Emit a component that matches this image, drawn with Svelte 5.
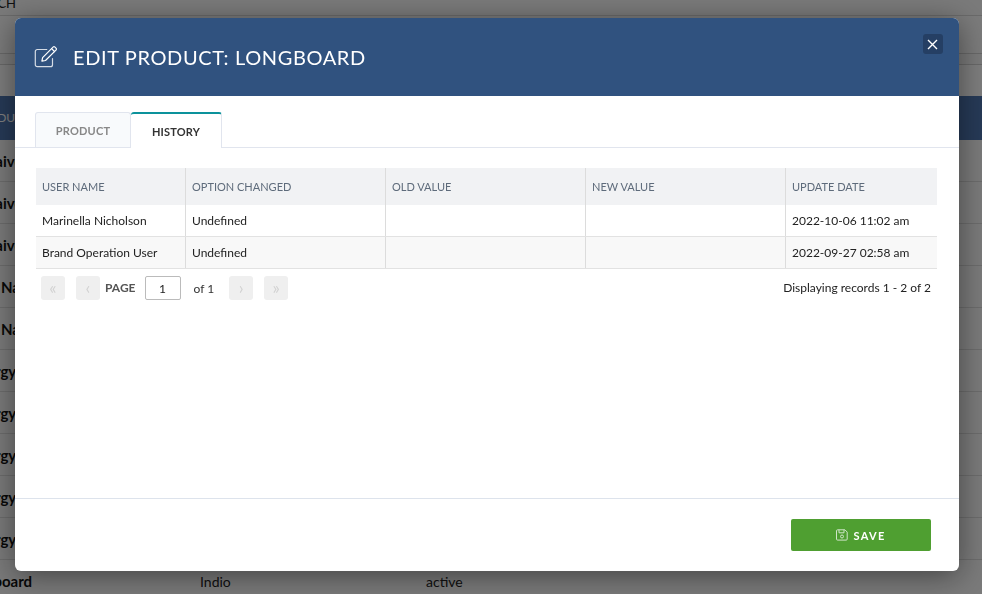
<script>
	const bgRows = [
		"Naive", "Naive", "Naive", "Nat", "Nat",
		"Energy", "Energy", "Energy", "Energy", "Energy"
	];
	const columns = ["User Name", "Option Changed", "Old Value", "New Value", "Update Date"];
	const records = [
		{ user: "Marinella Nicholson", option: "Undefined", date: "2022-10-06 11:02 am" },
		{ user: "Brand Operation User", option: "Undefined", date: "2022-09-27 02:58 am" }
	];
</script>

<div class="page">
	<div class="topbar"><span>SEARCH</span></div>
	<div class="toolbar"></div>
	<div class="subbar"></div>
	<div class="thead"><span>PRODUCT</span></div>
	{#each bgRows as name, i}
		<div class="bgrow"><b class:nat={i === 3 || i === 4} class:energy={i > 4}>{name}</b></div>
	{/each}
	<div class="bgrow last">
		<b>Longboard</b>
		<span class="city">Indio</span>
		<span class="state">active</span>
	</div>
</div>

<div class="overlay">
	<div class="modal">
		<header>
			<svg class="edit-icon" viewBox="0 0 24 24" width="24" height="24" fill="none" stroke="#fff" stroke-width="1.2" stroke-linejoin="round" stroke-linecap="round">
				<path d="M18.500 13.500v6.200a2 2 0 0 1-2 2H3.300a2 2 0 0 1-2-2V6.500a2 2 0 0 1 2-2h9.500" opacity="0.8" />
				<path d="M8.600 12.600 19.300 1.900a1 1 0 0 1 1.400 0l1.500 1.500a1 1 0 0 1 0 1.400L11.500 15.500l-3.600.7z" />
				<path d="M17.600 3.600l2.900 2.900" />
			</svg>
			<h1>EDIT PRODUCT: LONGBOARD</h1>
			<button class="close" aria-label="Close">
				<svg viewBox="0 0 11 11" width="11" height="11" stroke="#fff" stroke-width="1.4"><path d="M1 1l9 9M10 1l-9 9" /></svg>
			</button>
		</header>

		<div class="body">
			<div class="tabs">
				<div class="tab">PRODUCT</div>
				<div class="tab active">HISTORY</div>
			</div>

			<div class="grid">
				<div class="row head">
					{#each columns as col}
						<div class="cell">{col}</div>
					{/each}
				</div>
				{#each records as rec, i}
					<div class="row" class:alt={i % 2 === 1}>
						<div class="cell">{rec.user}</div>
						<div class="cell">{rec.option}</div>
						<div class="cell"></div>
						<div class="cell"></div>
						<div class="cell">{rec.date}</div>
					</div>
				{/each}
			</div>

			<div class="pager">
				<button class="pg" aria-label="First">«</button>
				<button class="pg second" aria-label="Previous">‹</button>
				<span class="page-label">PAGE</span>
				<input value="1" />
				<span class="of">of 1</span>
				<button class="pg" aria-label="Next">›</button>
				<button class="pg second" aria-label="Last">»</button>
				<span class="count">Displaying records 1 - 2 of 2</span>
			</div>
		</div>

		<footer>
			<button class="save">
				<svg viewBox="0 0 12 12" width="12" height="12" fill="none" stroke="#cfe5c8" stroke-width="1">
					<path d="M1.500.8h7.400l2.300 2.300v7a1 1 0 0 1-1 1h-8.700a1 1 0 0 1-1-1v-8.300a1 1 0 0 1 1-1z" />
					<path d="M3 .8v3h5v-3" />
					<circle cx="6" cy="7.500" r="1.500" />
				</svg>
				SAVE
			</button>
		</footer>
	</div>
</div>

<style>
	:global(body) {
		margin: 0;
		font-family: Lato, "Open Sans", sans-serif;
	}
	.page {
		height: 594px;
		overflow: hidden;
		background: #f4f4f4;
		color: #222;
		font-size: 14px;
	}
	.topbar {
		height: 15px;
		background: #f4f4f4;
		border-bottom: 1px solid #d4d4d4;
		line-height: 6px;
		font-size: 13px;
		overflow: hidden;
		margin-left: -34px;
	}
	.toolbar {
		height: 37px;
		background: #f6f6f6;
		border-bottom: 1px solid #d0d0d0;
	}
	.subbar {
		height: 31px;
		background: #fbfbfb;
		border-top: 1px solid #d0d0d0;
		margin-top: 10px;
	}
	.thead {
		height: 44px;
		background: #4d74ae;
		color: #fff;
		line-height: 44px;
		font-size: 12px;
		margin-left: -27px;
	}
	.bgrow {
		height: 41px;
		border-bottom: 1px solid #d8d8d8;
		line-height: 43px;
		font-size: 15px;
		white-space: nowrap;
	}
	.bgrow b {
		margin-left: -16px;
		color: #111;
	}
	.bgrow b.nat {
		margin-left: 1px;
	}
	.bgrow b.energy {
		margin-left: -30px;
	}
	.bgrow.last {
		display: flex;
		background: #f5f5f5;
		border: 0;
		font-size: 14px;
	}
	.bgrow.last b {
		width: 200px;
		margin-left: -39px;
		flex: none;
		font-size: 15px;
	}
	.city {
		margin-left: 39px;
		width: 226px;
		flex: none;
	}

	.overlay {
		position: fixed;
		inset: 0;
		background: rgba(0, 0, 0, 0.5);
		display: flex;
		justify-content: flex-start;
		align-items: flex-start;
		padding: 18px 0 0 15px;
	}
	.modal {
		width: 944px;
		height: 553px;
		background: #fff;
		border-radius: 6px;
		overflow: hidden;
		display: flex;
		flex-direction: column;
		box-shadow: 0 5px 30px rgba(0, 0, 0, 0.45);
	}
	header {
		flex: none;
		position: relative;
		height: 78px;
		background: #30527f;
		display: flex;
		align-items: center;
		padding-left: 19px;
		color: #fff;
	}
	.edit-icon {
		margin-right: 15px;
		flex: none;
	}
	h1 {
		margin: 0;
		font-size: 20px;
		font-weight: 400;
		letter-spacing: 0.62px;
	}
	.close {
		position: absolute;
		top: 16px;
		right: 16px;
		width: 20px;
		height: 20px;
		padding: 0 2px 0 0;
		border: 0;
		border-radius: 3px;
		background: #253f64;
		display: flex;
		align-items: center;
		justify-content: center;
	}
	.body {
		flex: 1;
		padding: 16px 0 0;
		min-height: 0;
	}
	.tabs {
		display: flex;
		padding-left: 20px;
		border-bottom: 1px solid #e1e5ee;
		height: 35px;
		font-size: 11px;
		font-weight: 700;
		letter-spacing: 0.2px;
	}
	.tab {
		width: 96px;
		height: 35px;
		box-sizing: border-box;
		background: #f8fafc;
		border: 1px solid #e1e5ee;
		border-bottom: 0;
		border-radius: 3px 3px 0 0;
		color: #888;
		text-align: center;
		line-height: 35px;
	}
	.tab.active {
		width: 91px;
		height: 36px;
		background: #fff;
		border-top: 2px solid #0c929b;
		border-left: 0;
		color: #333;
		line-height: 35px;
	}
	.grid {
		margin: 20px 22px 0 21px;
		font-size: 12px;
		color: #222;
	}
	.row {
		display: grid;
		grid-template-columns: 149px 200px 200px 200px 1fr;
		height: 32px;
		box-sizing: border-box;
		border-bottom: 1px solid #e2e2e2;
		line-height: 31px;
	}
	.row.alt {
		background: #f8f8f8;
	}
	.row.head {
		height: 37px;
		line-height: 37px;
		background: #f1f2f4;
		color: #5e6b7b;
		font-size: 11px;
		text-transform: uppercase;
		border: 0;
	}
	.cell {
		padding-left: 6px;
		border-left: 1px solid #dcdcdc;
		white-space: nowrap;
	}
	.cell:first-child {
		border-left: 0;
	}
	.pager {
		display: flex;
		align-items: center;
		margin: 7px 28px 0 26px;
		height: 24px;
		font-size: 12px;
		color: #333;
	}
	.pg {
		width: 24px;
		height: 24px;
		padding: 0 0 2px;
		border: 0;
		border-radius: 3px;
		background: #efefef;
		color: #d2d2d2;
		font-size: 17px;
		font-family: inherit;
	}
	.pg.second {
		margin-left: 11px;
	}
	.page-label {
		margin: 0 0 1px 5px;
		font-weight: 700;
		color: #555;
	}
	input {
		width: 36px;
		height: 24px;
		box-sizing: border-box;
		margin-left: 9px;
		border: 1px solid #bbb;
		border-radius: 2px;
		text-align: center;
		font: 12px Lato, sans-serif;
		color: #222;
		padding: 0;
	}
	.of {
		margin: 1px 15px 0 13px;
	}
	.count {
		margin: 0 0 1px auto;
		color: #222;
	}
	footer {
		flex: none;
		height: 73px;
		box-sizing: border-box;
		border-top: 1px solid #dde3ec;
		display: flex;
		justify-content: flex-end;
		padding: 20px 28px 0 0;
	}
	.save {
		width: 140px;
		height: 32px;
		border: 0;
		border-radius: 2px;
		background: #4f9f31;
		color: #fff;
		font: 700 11px Lato, sans-serif;
		letter-spacing: 1.3px;
		display: flex;
		align-items: center;
		justify-content: center;
		gap: 5px;
	}
</style>
